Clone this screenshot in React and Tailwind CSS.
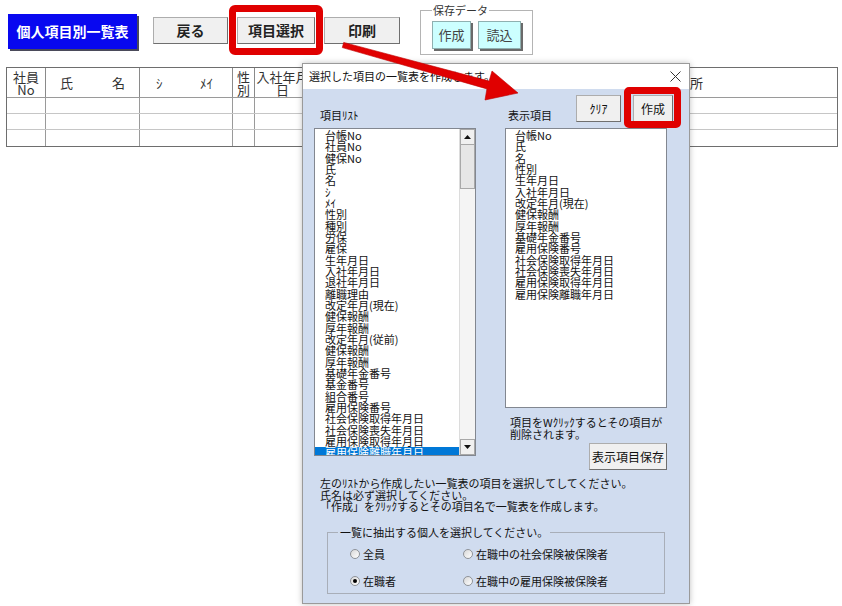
import React from "react";

const leftItems = [
    "台帳No", "社員No", "健保No", "氏", "名", "ｼ", "ﾒｲ", "性別", "種別", "労保", "雇保",
    "生年月日", "入社年月日", "退社年月日", "離職理由", "改定年月(現在)", "健保報酬", "厚年報酬",
    "改定年月(従前)", "健保報酬", "厚年報酬", "基礎年金番号", "基金番号", "組合番号", "雇用保険番号",
    "社会保険取得年月日", "社会保険喪失年月日", "雇用保険取得年月日", "雇用保険離職年月日",
];

const rightItems = [
    "台帳No", "氏", "名", "性別", "生年月日", "入社年月日", "改定年月(現在)", "健保報酬", "厚年報酬",
    "基礎年金番号", "雇用保険番号", "社会保険取得年月日", "社会保険喪失年月日", "雇用保険取得年月日",
    "雇用保険離職年月日",
];

const grayBtn =
    "h-[27px] bg-[#f0f0f0] border border-[#adadad] border-r-[#6f6f6f] border-b-[#6f6f6f] flex items-center justify-center";

function Radio({ label, checked }) {
    return (
        <div className="flex items-center h-[14px]">
            <span className="w-[10px] h-[10px] rounded-full border border-[#8f9398] bg-gradient-to-br from-[#d8d8d8] to-white flex items-center justify-center">
                {checked && <span className="w-[4px] h-[4px] rounded-full bg-black"></span>}
            </span>
            <span className="ml-[3px] text-[11px] leading-[14px]">{label}</span>
        </div>
    );
}

function ListBox({ items, height, selectedLast, scroll, padLeft }) {
    return (
        <div className={`w-[162px] ${height} border border-[#828790] bg-white flex overflow-hidden`}>
            <div className="flex-1 pt-[1px] text-[11px] leading-[11.33px] overflow-hidden">
                {items.map((item, i) => (
                    <div
                        key={i}
                        className={`${padLeft} whitespace-nowrap h-[11.33px] ${
                            selectedLast && i === items.length - 1 ? "bg-[#0078d7] text-white" : "text-[#111]"
                        }`}
                    >
                        {item}
                    </div>
                ))}
            </div>

            {/* Scrollbar */}
            {scroll && (
                <div className="w-[16px] bg-[#f4f4f4] border-l border-[#dcdcdc] flex flex-col">
                    <div className="h-[16px] bg-[#f0f0f0] border border-[#a8a8a8] flex items-center justify-center">
                        <svg width="7" height="4" viewBox="0 0 7 4"><path d="M3.5 0 L7 4 L0 4 Z" fill="#111" /></svg>
                    </div>
                    <div className="h-[44px] bg-[#e6e6e6] border border-[#a8a8a8] border-t-0"></div>
                    <div className="flex-1"></div>
                    <div className="h-[16px] bg-[#f0f0f0] border border-[#a8a8a8] flex items-center justify-center">
                        <svg width="7" height="4" viewBox="0 0 7 4"><path d="M0 0 L7 0 L3.5 4 Z" fill="#111" /></svg>
                    </div>
                </div>
            )}
        </div>
    );
}

function App() {
    const rowCols = ["w-[39px]", "w-[94px]", "w-[93px]", "w-[22px]", "w-[56px]", "w-[250px]"];

    return (
        <div className="relative w-[842px] h-[606px] bg-white overflow-hidden font-['Noto_Sans_CJK_JP','Liberation_Sans',sans-serif] text-[#222]">
            {/* Top buttons */}
            <div className="flex items-start h-[67px]">
                <div className="ml-[8px] mt-[14px] w-[129px] h-[35px] bg-[#0808f0] shadow-[2px_2px_0_#4a4a5a] text-white font-bold text-[14px] flex items-center justify-center">
                    個人項目別一覧表
                </div>
                <div className={`ml-[16px] mt-[17px] w-[75px] ${grayBtn} font-bold text-[14px]`}>戻る</div>
                <div className={`ml-[9px] mt-[17px] w-[78px] ${grayBtn} font-bold text-[14px]`}>項目選択</div>
                <div className={`ml-[9px] mt-[17px] w-[76px] ${grayBtn} font-bold text-[14px]`}>印刷</div>

                {/* 保存データ */}
                <div className="relative ml-[20px] mt-[10px] w-[113px] h-[45px] border border-[#b4b4b4] flex items-start pl-[11px] pt-[10px] gap-[7px]">
                    <span className="absolute -top-[8px] left-[11px] bg-white px-[1px] text-[11px] leading-[14px] text-[#333]">
                        保存データ
                    </span>
                    <div className="w-[39px] h-[28px] bg-[#ccffff] border border-[#8fb0b0] shadow-[2px_2px_0_#6a6a6a] text-[13px] text-[#444] flex items-center justify-center">
                        作成
                    </div>
                    <div className="w-[43px] h-[28px] bg-[#ccffff] border border-[#8fb0b0] shadow-[2px_2px_0_#6a6a6a] text-[13px] text-[#444] flex items-center justify-center">
                        読込
                    </div>
                </div>
            </div>

            {/* Table */}
            <div className="ml-[6px] w-[832px] border border-[#6e6e6e] text-[13px] text-[#333]">
                <div className="flex h-[30px] border-b border-[#9a9a9a]">
                    <div className="w-[39px] border-r border-[#8a8a8a] flex flex-col items-center justify-center leading-[13px]">
                        <span>社員</span>
                        <span>No</span>
                    </div>
                    <div className="w-[94px] border-r border-[#8a8a8a] flex items-center justify-between px-[14px]">
                        <span>氏</span>
                        <span>名</span>
                    </div>
                    <div className="w-[93px] border-r border-[#8a8a8a] flex items-center justify-between pl-[16px] pr-[19px]">
                        <span>ｼ</span>
                        <span>ﾒｲ</span>
                    </div>
                    <div className="w-[22px] border-r border-[#8a8a8a] flex flex-col items-center justify-center leading-[13px]">
                        <span>性</span>
                        <span>別</span>
                    </div>
                    <div className="w-[56px] border-r border-[#8a8a8a] flex flex-col items-center justify-center leading-[13px] whitespace-nowrap">
                        <span>入社年月</span>
                        <span>日</span>
                    </div>
                    <div className="w-[250px] border-r border-[#8a8a8a]"></div>
                    <div className="flex-1 flex items-center pl-[116px]">住所</div>
                </div>
                {[0, 1, 2].map((r) => (
                    <div key={r} className={`flex ${r === 2 ? "h-[16px]" : "h-[16px] border-b border-[#c6c6c6]"}`}>
                        {rowCols.map((w, i) => (
                            <div key={i} className={`${w} border-r border-[#9a9a9a]`}></div>
                        ))}
                        <div className="flex-1"></div>
                    </div>
                ))}
            </div>

            {/* Dialog */}
            <div className="absolute left-[302px] top-[63px] w-[388px] h-[541px] border border-[#9a9a9a] bg-[#d0dcef] shadow-[0_0_6px_rgba(0,0,0,0.25)] flex flex-col">
                <div className="h-[25px] bg-white flex items-center pl-[6px] pr-[8px]">
                    <span className="text-[11px] text-[#111]">選択した項目の一覧表を作成します。</span>
                    <svg className="ml-auto" width="11" height="11" viewBox="0 0 11 11">
                        <path d="M0.5 0.5 L10.5 10.5 M10.5 0.5 L0.5 10.5" stroke="#333" strokeWidth="1" />
                    </svg>
                </div>

                <div className="flex-1 pl-[11px] text-[#111]">
                    <div className="flex items-start">
                        {/* 項目リスト */}
                        <div className="w-[162px]">
                            <div className="h-[39px] flex items-end pb-[6px] pl-[6px] text-[11px] leading-[14px]">項目ﾘｽﾄ</div>
                            <ListBox items={leftItems} height="h-[328px]" selectedLast scroll padLeft="pl-[10px]" />
                        </div>

                        {/* 表示項目 */}
                        <div className="ml-[29px] w-[162px] flex flex-col">
                            <div className="w-[168px] h-[39px] flex items-start">
                                <div className="flex-1 self-end pb-[6px] pl-[3px] text-[11px] leading-[14px]">表示項目</div>
                                <div className={`mt-[6px] w-[45px] ${grayBtn} text-[12px]`}>ｸﾘｱ</div>
                                <div className={`ml-[12px] mt-[6px] w-[40px] ${grayBtn} text-[12px]`}>作成</div>
                            </div>
                            <ListBox items={rightItems} height="h-[280px]" padLeft="pl-[9px]" />
                            <div className="mt-[8px] pl-[5px] text-[11px] leading-[12px]">
                                <div>項目をWｸﾘｯｸするとその項目が</div>
                                <div>削除されます。</div>
                            </div>
                            <div className={`mt-[3px] ml-auto w-[78px] ${grayBtn} text-[12px]`}>表示項目保存</div>
                        </div>
                    </div>

                    {/* Instructions */}
                    <div className="mt-[8px] ml-[6px] text-[11px] leading-[11.5px]">
                        <div>左のﾘｽﾄから作成したい一覧表の項目を選択してしてください。</div>
                        <div>氏名は必ず選択してください。</div>
                        <div>「作成」をｸﾘｯｸするとその項目名で一覧表を作成します。</div>
                    </div>

                    {/* 抽出対象 */}
                    <div className="relative mt-[19px] ml-[13px] w-[338px] h-[62px] border border-[#a8aeb8] pt-[14px] pl-[22px]">
                        <span className="absolute -top-[8px] left-[10px] bg-[#d0dcef] px-[2px] text-[11px] leading-[14px]">
                            一覧に抽出する個人を選択してください。
                        </span>
                        <div className="grid grid-cols-[113px_1fr] gap-y-[13px]">
                            <Radio label="全員" />
                            <Radio label="在職中の社会保険被保険者" />
                            <Radio label="在職者" checked />
                            <Radio label="在職中の雇用保険被保険者" />
                        </div>
                    </div>
                </div>
            </div>

            {/* Red annotation arrow */}
            <svg className="absolute left-0 top-0 pointer-events-none" width="842" height="606" viewBox="0 0 842 606">
                <polygon
                    points="343.7,42.4 489.1,81.1 492,71 518,93 485,100 486.9,88.9 342.3,47.6"
                    fill="#e00000"
                    stroke="#c00000"
                    strokeWidth="0.6"
                    strokeLinejoin="round"
                />
            </svg>

            {/* Red highlight frames */}
            <div className="absolute left-[229px] top-[5px] w-[94px] h-[50px] border-[7px] border-[#e00000] rounded-[6px] pointer-events-none"></div>
            <div className="absolute left-[624px] top-[87px] w-[57px] h-[41px] border-[7px] border-[#e00000] rounded-[5px] pointer-events-none"></div>
        </div>
    );
}

export default App;
